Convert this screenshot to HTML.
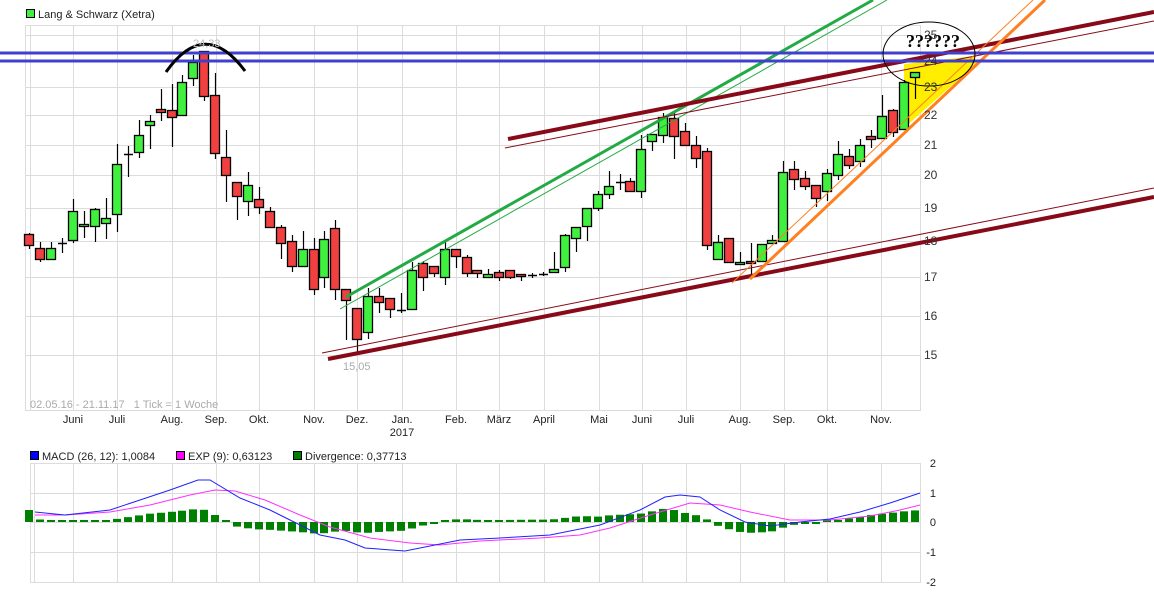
<!DOCTYPE html>
<html><head><meta charset="utf-8">
<style>
html,body{margin:0;padding:0;background:#fff;}
svg{display:block;font-family:"Liberation Sans",sans-serif;}
</style></head>
<body>
<svg id="s" width="1154" height="601" viewBox="0 0 1154 601" xmlns="http://www.w3.org/2000/svg">
<rect width="1154" height="601" fill="#fff"/>
<g id="grid" stroke="#dcdcdc" stroke-width="1" fill="none"></g>
<g id="hist"></g>
<g id="lines"></g>
<g id="candles"></g>
<g id="over"></g>
<g id="txt" font-size="12" fill="#222"></g>
</svg>
<script>
var NS="http://www.w3.org/2000/svg";
function el(p,t,a,txt){var e=document.createElementNS(NS,t);for(var k in a)e.setAttribute(k,a[k]);if(txt!==undefined)e.textContent=txt;document.getElementById(p).appendChild(e);return e;}
var months=[73,117,172,216,259,314,357,402,456,499,544,599,642,686,740,784,827,881];
var mnames=["Juni","Juli","Aug.","Sep.","Okt.","Nov.","Dez.","Jan.","Feb.","März","April","Mai","Juni","Juli","Aug.","Sep.","Okt.","Nov."];
var py={25:35,24:61,23:87,22:115,21:145,20:175,19:208,18:241,17:277,16:316,15:355};
el("grid","rect",{x:25.5,y:25.5,width:895,height:385});
el("grid","line",{x1:30.5,y1:25,x2:30.5,y2:410});
months.forEach(function(x){el("grid","line",{x1:x+.5,y1:25,x2:x+.5,y2:410});el("grid","line",{x1:x+.5,y1:463,x2:x+.5,y2:583});});
for(var p in py){el("grid","line",{x1:25,y1:py[p]+.5,x2:920,y2:py[p]+.5});}
el("grid","rect",{x:30.5,y:463.5,width:890,height:119});
el("grid","line",{x1:34.5,y1:463,x2:34.5,y2:583});
[493,522,552].forEach(function(y){el("grid","line",{x1:30,y1:y+.5,x2:920,y2:y+.5});});
var C=[[29,234,245,233,249],[40,248,259,242,262],[51,259,248,242,259],[62,243,243,238,253],[73,240,211,199,243],[84,226,224,211,238],[95,226,209,208,242],[106,223,218,198,239],[117,214,164,144,232],[128,154,154,146,177],[139,152,135,120,158],[150,125,121,115,149],[161,109,112,89,121],[172,110,117,84,147],[182,115,82,75,115],[193,78,62,55,86],[204,51,96,51,101],[215,95,153,73,159],[226,157,175,130,202],[237,182,196,182,220],[248,201,185,172,216],[259,199,207,187,214],[270,211,227,207,227],[281,227,243,225,259],[292,241,266,235,272],[303,266,249,231,266],[314,249,289,238,295],[324,277,239,231,288],[335,228,289,220,300],[346,289,300,289,340],[357,308,339,308,353],[368,332,296,288,339],[379,296,302,288,313],[390,298,309,298,318],[401,310,310,293,313],[412,309,270,262,309],[423,263,277,261,291],[434,266,273,266,277],[445,277,249,241,285],[456,249,256,249,268],[467,257,273,255,277],[477,270,273,270,278],[488,277,274,269,278],[499,272,277,270,281],[510,270,277,270,279],[521,274,276,274,281],[532,275,275,273,278],[543,274,274,272,276],[554,272,269,252,272],[565,267,235,234,272],[576,238,227,227,252],[587,226,208,208,241],[598,208,194,191,211],[609,194,186,171,199],[620,182,182,174,190],[630,181,191,178,192],[641,191,149,135,198],[652,141,134,134,151],[663,135,117,113,143],[674,118,136,113,159],[685,131,145,123,145],[696,145,158,136,168],[707,151,245,148,250],[718,259,242,235,259],[729,238,262,238,263],[740,264,262,252,264],[751,261,263,243,279],[762,261,244,244,261],[772,243,240,235,243],[783,241,172,161,241],[794,169,179,161,190],[805,178,186,171,190],[816,185,198,185,207],[827,191,173,169,201],[838,175,154,141,180],[849,156,165,149,169],[860,161,145,139,167],[871,136,139,130,148],[882,138,116,95,138],[893,110,132,109,137],[904,129,82,80,129],[915,77,72,72,99]];
C.forEach(function(c){var x=c[0],o=c[1],cl=c[2],h=c[3],l=c[4];
 el("candles","line",{x1:x+.5,y1:h,x2:x+.5,y2:l,stroke:"#000","stroke-width":1.2});
 var top=Math.min(o,cl),bh=Math.abs(o-cl);
 if(bh<1){el("candles","line",{x1:x-4,y1:o+.5,x2:x+5,y2:o+.5,stroke:"#000","stroke-width":1.5});}
 else el("candles","rect",{x:x-4.5,y:top+.5,width:9,height:bh,fill:(cl<o?"#3ff03f":"#f04040"),stroke:"#000","stroke-width":1.3});
});
el("lines","polygon",{points:"904,64 975,56 976,64 904,128",fill:"#ffee00"});
function L(x1,y1,x2,y2,c,w){el("over","line",{x1:x1,y1:y1,x2:x2,y2:y2,stroke:c,"stroke-width":w});}
L(346,297,873,0,"#22aa44",3);
L(340,309,887,0,"#22aa44",1);
L(328,359,1154,197,"#880a18",4);
L(322,353,1154,188,"#880a18",1);
L(508,139,1154,12,"#880a18",4);
L(505,148,1154,21,"#880a18",1);
L(750,279,1045,0,"#ff8020",3);
L(732,283,1033,0,"#ff8020",1);
L(0,53,1154,53,"#4040d0",3);
L(0,61,1154,61,"#4040d0",3);
el("over","path",{d:"M166,72 Q205,17 245,71",fill:"none",stroke:"#000","stroke-width":3});
el("over","ellipse",{cx:929,cy:54,rx:46,ry:32,fill:"none",stroke:"#000","stroke-width":1});
el("over","text",{x:906,y:47,"font-size":"18","font-weight":"bold","font-family":"Liberation Serif, serif",fill:"#000"},"??????");
var B=[[35,512],[65,515],[110,510],[140,500],[170,490],[198,480],[210,480],[240,498],[270,510],[300,525],[320,535],[345,540],[365,548],[405,551],[430,546],[460,540],[500,538],[550,535],[600,525],[640,510],[665,497],[680,495],[700,497],[720,510],[745,522],[770,526],[800,522],[830,519],[860,512],[890,503],[920,493]];
var M=[[35,515],[65,515],[110,512],[150,505],[190,495],[215,490],[235,491],[265,500],[300,515],[330,527],[370,538],[410,543],[440,545],[480,541],[540,538],[580,535],[610,528],[650,515],[690,503],[720,505],[750,512],[790,520],[830,520],[870,516],[900,510],[920,505]];
function interp(A,x){for(var i=0;i<A.length-1;i++){if(x>=A[i][0]&&x<=A[i+1][0]){var t=(x-A[i][0])/(A[i+1][0]-A[i][0]);return A[i][1]+t*(A[i+1][1]-A[i][1]);}}return A[A.length-1][1];}
C.forEach(function(c){var x=c[0];var d=interp(M,x)-interp(B,x);var hh=Math.max(Math.abs(d),2);
 var y=d>0?522-hh:522; el("hist","rect",{x:x-4,y:y,width:8,height:hh,fill:"#008000"});});
el("over","polyline",{points:M.map(function(p){return p.join(",")}).join(" "),fill:"none",stroke:"#ff30ff","stroke-width":1});
el("over","polyline",{points:B.map(function(p){return p.join(",")}).join(" "),fill:"none",stroke:"#2020ff","stroke-width":1});
var T=function(x,y,s,a){a=a||{};a.x=x;a.y=y;return el("txt","text",a,s);};
el("txt","rect",{x:26.5,y:9.5,width:8,height:8,fill:"#3ff03f",stroke:"#000"});
T(38,18,"Lang & Schwarz (Xetra)",{"font-size":"11"});
for(var p in py){T(924,py[p]+4,p,{fill:"#333"});}
mnames.forEach(function(n,i){T(months[i],423,n,{"text-anchor":"middle","font-size":"11"});});
T(402,436,"2017",{"text-anchor":"middle","font-size":"11"});
T(30,408,"02.05.16 - 21.11.17\u00a0\u00a0\u00a01 Tick = 1 Woche",{fill:"#aaa","font-size":"11"});
T(343,370,"15,05",{fill:"#aaa","font-size":"11"});
T(193,47,"24,33",{fill:"#bbb","font-size":"11"});
el("txt","rect",{x:30.5,y:451.5,width:8,height:8,fill:"#0000ff",stroke:"#000"});
T(42,460,"MACD (26, 12): 1,0084",{"font-size":"11"});
el("txt","rect",{x:176.5,y:451.5,width:8,height:8,fill:"#ff00ff",stroke:"#000"});
T(188,460,"EXP (9): 0,63123",{"font-size":"11"});
el("txt","rect",{x:293.5,y:451.5,width:8,height:8,fill:"#008000",stroke:"#000"});
T(305,460,"Divergence: 0,37713",{"font-size":"11"});
[["2",467],["1",497],["0",526],["-1",556],["-2",586]].forEach(function(a){T(936,a[1],a[0],{"text-anchor":"end","font-size":"11"});});
</script>
</body></html>
